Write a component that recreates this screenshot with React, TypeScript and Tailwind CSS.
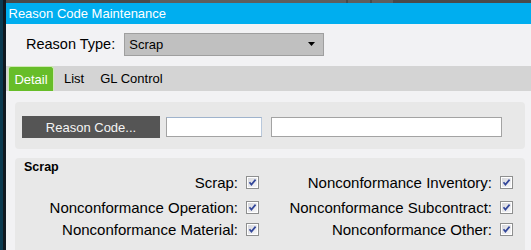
import React from 'react';

const font = { fontFamily: '"Liberation Sans", Arial, sans-serif' };

const Check: React.FC = () => (
    <svg width="13" height="13" viewBox="0 0 13 13" className="shrink-0">
        <defs>
            <linearGradient id="cbg" x1="0" y1="0" x2="1" y2="1">
                <stop offset="0" stopColor="#d6d7dc" />
                <stop offset="1" stopColor="#f7f7f9" />
            </linearGradient>
        </defs>
        <rect x="0.5" y="0.5" width="12" height="12" fill="#ffffff" stroke="#8e8f8f" />
        <rect x="2" y="2" width="9" height="9" fill="url(#cbg)" />
        <path d="M3.5 6.3 L5.4 8.6 L9.6 3.6" fill="none" stroke="#33479a" strokeWidth="1.7" />
    </svg>
);

const Row: React.FC<{ label: string }> = ({ label }) => (
    <div className="flex items-center justify-end gap-[8px] h-[22px]">
        <span className="text-[15px] text-black leading-none whitespace-nowrap">{label}</span>
        <Check />
    </div>
);

const App: React.FC = () => {
    return (
        <div className="w-[531px] h-[250px] overflow-hidden flex bg-[#f2f2f4]" style={font}>
            {/* window edge */}
            <div className="flex shrink-0">
                <div className="w-[3px] bg-[#0b3a50]"></div>
                <div className="w-[3px] bg-[#101820]"></div>
            </div>

            <div className="flex-1 flex flex-col min-w-0">
                <div className="h-[3px] bg-[#4a4a4a] flex">
                    <div className="w-[144px]"></div>
                    <div className="w-[196px] bg-[#5e5e5e]"></div>
                    <div className="w-[2px]"></div>
                    <div className="w-[22px] bg-[#5e5e5e]"></div>
                    <div className="w-[2px]"></div>
                    <div className="w-[21px] bg-[#5e5e5e]"></div>
                </div>

                {/* Title */}
                <div className="h-[21px] bg-[#00aeef] flex items-center pl-[2.5px]">
                    <span className="text-white text-[13px] leading-none">Reason Code Maintenance</span>
                </div>

                {/* Reason Type */}
                <div className="h-[42px] flex items-start pl-[20px] pt-[8.5px]">
                    <div className="h-[23px] flex items-center">
                        <span className="text-[14.5px] text-black leading-none">Reason Type:</span>
                    </div>
                    <div className="ml-[9px] w-[200px] h-[23px] bg-[#c0c0c0] border border-[#9f9f9f] flex items-center justify-between pl-[4px] pr-[8px]">
                        <span className="text-[13px] text-black leading-none">Scrap</span>
                        <svg width="7" height="4" viewBox="0 0 7 4">
                            <polygon points="0,0 7,0 3.5,4" fill="#000" />
                        </svg>
                    </div>
                </div>

                {/* Tabs */}
                <div className="h-[25px] bg-[#d4d4d4] flex items-end">
                    <div className="ml-[2px] w-[46px] h-[25px] bg-[#67bd29] border border-[#cfe9b4] border-b-0 rounded-t-[3px] flex items-center justify-center">
                        <span className="text-white text-[13px] leading-none">Detail</span>
                    </div>
                    <div className="h-[25px] flex items-center ml-[10px] gap-[16px]">
                        <span className="text-[13px] text-black leading-none">List</span>
                        <span className="text-[13px] text-black leading-none">GL Control</span>
                    </div>
                </div>

                {/* Body */}
                <div className="flex-1 flex flex-col pl-[9px] pr-[6px] pt-[11px] gap-[9px]">
                    <div className="h-[47px] shrink-0 bg-[#e8e8e8] rounded-[4px] flex items-start pt-[14px] pl-[7px]">
                        <button className="w-[138px] h-[22px] bg-[#555555] text-[#f4f4f4] text-[13px] leading-none flex items-center justify-center">
                            Reason Code...
                        </button>
                        <div className="ml-[6px] mt-[1px] w-[96px] h-[20px] bg-white border border-[#a3a3a3] border-t-[#9fb3cc] border-r-[#b8c8dc]"></div>
                        <div className="ml-[9px] mt-[1px] w-[231px] h-[20px] bg-white border border-[#a3a3a3]"></div>
                    </div>

                    <div className="flex-1 bg-[#e8e8e8] rounded-t-[4px] pl-[9px] pr-[12px] pt-[2px]">
                        <div className="text-[12.5px] font-bold text-black leading-[15px]">Scrap</div>
                        <div className="flex">
                            <div className="w-[235px] flex flex-col">
                                <div className="mt-[-4px]"><Row label="Scrap:" /></div>
                                <div className="mt-[3px]"><Row label="Nonconformance Operation:" /></div>
                                <Row label="Nonconformance Material:" />
                            </div>
                            <div className="flex-1 flex flex-col">
                                <div className="mt-[-4px]"><Row label="Nonconformance Inventory:" /></div>
                                <div className="mt-[3px]"><Row label="Nonconformance Subcontract:" /></div>
                                <Row label="Nonconformance Other:" />
                            </div>
                        </div>
                    </div>
                </div>
            </div>
        </div>
    );
};

export default App;
